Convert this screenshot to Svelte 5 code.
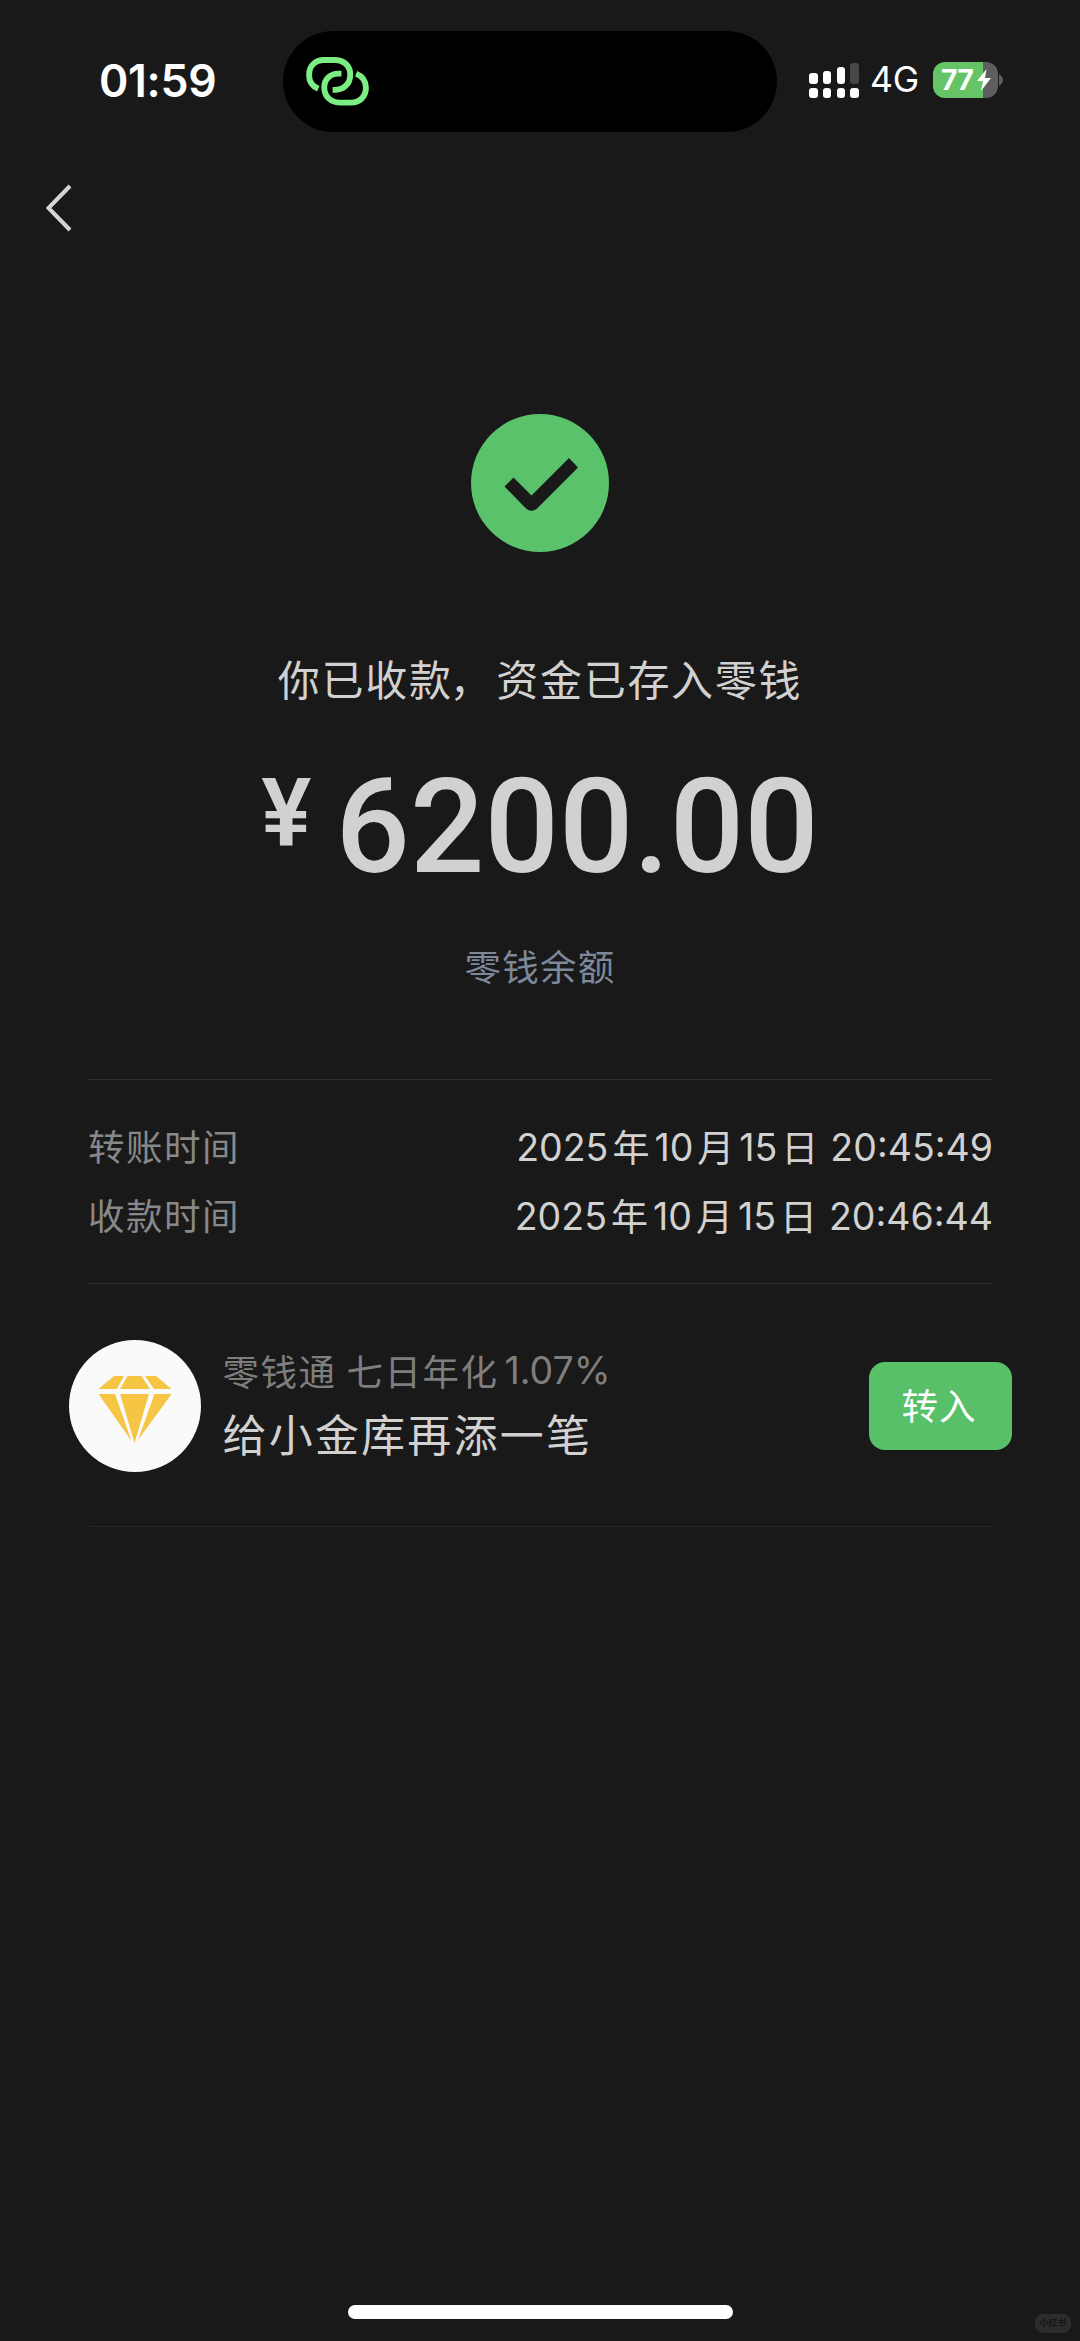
<script lang="ts">
  const balance = '6200.00';

  const records = [
    { label: '转账时间', date: ['2025', '年', '10', '月', '15', '日'], time: '20:45:49' },
    { label: '收款时间', date: ['2025', '年', '10', '月', '15', '日'], time: '20:46:44' },
  ];

  // height of the upper bar of each signal column
  const signal = [
    { height: 11, on: true },
    { height: 13, on: true },
    { height: 17, on: true },
    { height: 21, on: false },
  ];

  const isDigits = (part: string) => /\d/.test(part);
</script>

<div class="screen">
  <header class="status">
    <span class="clock">01:59</span>
    <div class="island">
      <svg class="link" viewBox="0 0 64 50" width="63" height="49">
        <path d="M12.4 32.4 C6 29.5 3 24.5 3 18.5 C3 9 9.5 3 18 3 H29 C39 3 45 9.5 45 18 C45 26.5 39 33.5 30 33.500 H27" />
        <path d="M36 17 H33 C24 17 18.5 23 18.5 31 C18.5 40 25 46.5 34 46.5 H46 C55 46.5 61 40 61 31.5 C61 24.5 57.5 19.5 51 17" />
      </svg>
    </div>
    <div class="indicators">
      <div class="signal">
        {#each signal as column}
          <div class="column">
            <i class:off={!column.on} style="height: {column.height}px"></i>
            <i class="dot"></i>
          </div>
        {/each}
      </div>
      <span class="network">4G</span>
      <div class="battery">
        <span>77</span>
        <svg viewBox="0 0 14 22" width="14" height="22">
          <path d="M9.5 0 L0 12 H6 L4 22 L14 9 H8 Z" />
        </svg>
      </div>
      <svg class="tip" viewBox="0 0 4 12" width="4" height="12">
        <path d="M0 0 Q4 3 4 6 Q4 9 0 12 Z" />
      </svg>
    </div>
  </header>

  <nav>
    <svg viewBox="0 0 28 50" width="28" height="50">
      <path d="M25 3 L3.5 25 L25 47" />
    </svg>
  </nav>

  <main>
    <svg class="done" viewBox="0 0 138 138" width="138" height="138">
      <circle cx="69" cy="69" r="69" />
      <path d="M33.5 72.5 L42.5 63.5 L60.5 81.5 L98 44 L107 53.5 L66 94.5 Q60.5 99 55 94.5 Z" />
    </svg>

    <h1>你已收款<span class="comma">，</span>资金已存入零钱</h1>
    <p class="amount"><span class="yen">¥</span><span>{balance}</span></p>
    <p class="wallet">零钱余额</p>

    <section class="records">
      {#each records as record}
        <div class="record">
          <span class="label">{record.label}</span>
          <span class="value"
            >{#each record.date as part}<span class:cjk={!isDigits(part)}>{part}</span>{/each}<span class="time"
              >{record.time}</span
            ></span
          >
        </div>
      {/each}
    </section>

    <section class="promo">
      <div class="avatar">
        <svg viewBox="0 0 74 68" width="74" height="68">
          <path d="M16 1 H26 L19 14 H0.5 Z M29.5 1 H43.5 L52 14 H22 Z M47 1 H58 L73.5 14 H56 Z" />
          <path d="M0.5 19 H17 L33.5 66 Z M22 19 H51 L36.5 68 Z M56.5 19 H73.5 L40 65 Z" />
        </svg>
      </div>
      <div class="copy">
        <p class="rate">零钱通<span class="days">七日年化</span><span class="percent">1.07%</span></p>
        <p class="pitch">给小金库再添一笔</p>
      </div>
      <button>转入</button>
    </section>
  </main>

  <div class="home"></div>
  <span class="mark">小红书</span>
</div>

<style>
  :global(body) {
    margin: 0;
    background: #191919;
  }

  * {
    box-sizing: border-box;
  }

  .screen {
    position: relative;
    display: flex;
    flex-direction: column;
    width: 1080px;
    height: 2341px;
    overflow: hidden;
    background: #191919;
    color: #d1d1d1;
    font-family: 'Noto Sans CJK SC', sans-serif;
  }

  h1,
  p {
    margin: 0;
    font-weight: 400;
    white-space: nowrap;
  }

  .status {
    display: flex;
    align-items: flex-start;
    height: 132px;
    padding-top: 31px;
    font-family: Inter, sans-serif;
    color: #fff;
  }

  .clock {
    width: 283px;
    padding-left: 99px;
    font-size: 44.5px;
    font-weight: 600;
    line-height: 100px;
    letter-spacing: -0.3px;
  }

  .island {
    width: 494px;
    height: 101px;
    padding: 26px 0 0 23px;
    border-radius: 51px;
    background: #000;
  }

  .link {
    display: block;
    fill: none;
    stroke: #7bed83;
    stroke-width: 6;
  }

  .indicators {
    display: flex;
    flex-shrink: 0;
    align-items: center;
    height: 36px;
    margin: 31px 0 0 32px;
  }

  .signal {
    display: flex;
    gap: 5.3px;
    height: 36px;
  }

  .column {
    display: flex;
    flex-direction: column;
    justify-content: flex-end;
    gap: 4px;
  }

  .column i {
    width: 8.5px;
    border-radius: 3px;
    background: #fff;
  }

  .column i.off {
    background: #474747;
  }

  .column .dot {
    height: 10px;
  }

  .network {
    flex-shrink: 0;
    width: 74px;
    padding-left: 11px;
    font-size: 35.5px;
    line-height: 38px;
  }

  .battery {
    display: flex;
    flex-shrink: 0;
    align-items: center;
    width: 65px;
    height: 36px;
    padding-left: 8px;
    border-radius: 12px;
    background: linear-gradient(to right, #65c466 50px, #5e5e60 50px);
    font-size: 28.5px;
    font-weight: 700;
    line-height: 36px;
  }

  .battery span {
    width: 36px;
    letter-spacing: -0.8px;
  }

  .battery path {
    fill: #fff;
  }

  .tip {
    margin-left: 1px;
    fill: #5e5e60;
  }

  nav {
    height: 282px;
    padding: 51px 0 0 45px;
  }

  nav path {
    fill: none;
    stroke: #d5d5d5;
    stroke-width: 4;
  }

  main {
    display: flex;
    flex-direction: column;
    align-items: center;
  }

  .done circle {
    fill: #5ac26b;
  }

  .done path {
    fill: #191919;
  }

  h1 {
    margin-top: 96px;
    font-size: 42px;
    line-height: 60px;
    letter-spacing: 1.7px;
  }

  .comma {
    margin: 0 3px 0 -3px;
  }

  .amount {
    display: flex;
    align-items: flex-start;
    height: 136px;
    margin-top: 51px;
    font-family: Roboto, sans-serif;
    font-size: 131px;
    font-weight: 500;
    line-height: 136px;
  }

  .yen {
    margin-right: 24px;
    font-size: 94px;
    font-weight: 600;
    line-height: 108px;
  }

  .wallet {
    margin-top: 44px;
    font-size: 36.5px;
    line-height: 54px;
    letter-spacing: 1.3px;
    color: #7d889b;
  }

  .records {
    width: 904px;
    height: 205px;
    margin-top: 86px;
    padding-top: 33px;
    border-top: 1px solid #303030;
    border-bottom: 1px solid #303030;
  }

  .record {
    display: flex;
    justify-content: space-between;
    height: 69px;
    font-size: 36.5px;
    line-height: 66px;
  }

  .label {
    letter-spacing: 1.5px;
    color: #888;
  }

  .value {
    display: flex;
    margin-right: -1px;
    font-family: Inter, sans-serif;
    font-size: 37.5px;
    line-height: 69px;
  }

  .cjk {
    padding: 0 5px 0 4px;
    font-family: 'Noto Sans CJK SC', sans-serif;
    font-size: 37px;
    line-height: 66px;
  }

  .time {
    margin-left: 7px;
  }

  .promo {
    position: relative;
    display: flex;
    align-items: center;
    width: 943px;
    height: 243px;
  }

  /* divider is narrower than the promo row */
  .promo::after {
    content: '';
    position: absolute;
    right: 20px;
    bottom: 0;
    left: 20px;
    height: 1px;
    background: #282828;
  }

  .avatar {
    display: flex;
    align-items: center;
    justify-content: center;
    width: 132px;
    height: 132px;
    border-radius: 50%;
    background: #fafafa;
  }

  .avatar svg {
    margin-top: 7px;
  }

  .avatar path {
    fill: #f5c543;
  }

  .copy {
    flex: 1;
    padding: 0 0 3px 22px;
  }

  .rate {
    display: flex;
    font-size: 36.5px;
    line-height: 57px;
    letter-spacing: 1.5px;
    color: #7e7e7e;
  }

  .days {
    margin-left: 10px;
  }

  .percent {
    margin-left: 6px;
    font-family: Inter, sans-serif;
    font-size: 37.5px;
    letter-spacing: 0;
  }

  .pitch {
    font-size: 44px;
    line-height: 68px;
    letter-spacing: 2.2px;
  }

  button {
    width: 143px;
    height: 88px;
    padding: 0 2px 2px 0;
    border: 0;
    border-radius: 16px;
    background: #57c069;
    color: #fff;
    font-family: inherit;
    font-size: 36.5px;
    letter-spacing: 1px;
  }

  .home {
    width: 385px;
    height: 14px;
    margin: auto auto 22px 348px;
    border-radius: 7px;
    background: #fff;
  }

  .mark {
    position: absolute;
    right: 9px;
    bottom: 8px;
    width: 36px;
    height: 19px;
    border-radius: 8px;
    background: #2c2c2c;
    color: #151515;
    font-size: 9px;
    font-weight: 700;
    line-height: 18px;
    text-align: center;
  }
</style>
